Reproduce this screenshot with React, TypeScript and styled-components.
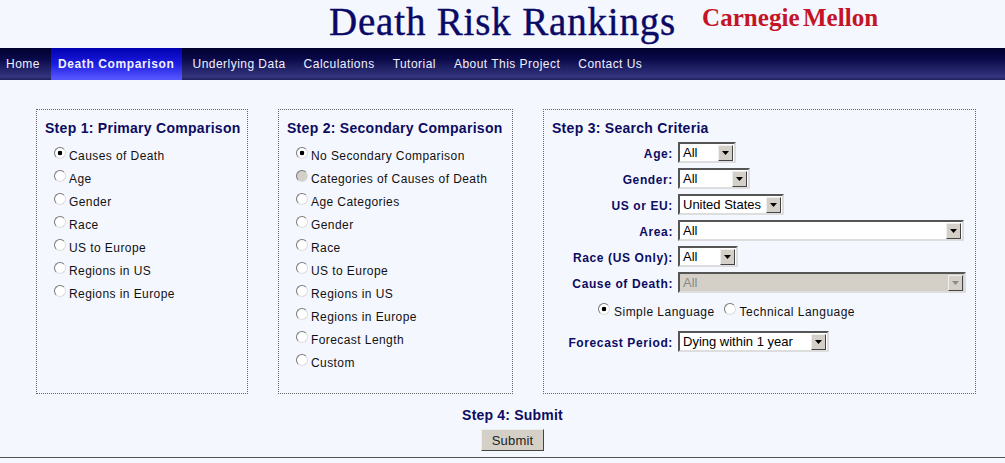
import React from "react";
import styled, { createGlobalStyle } from "styled-components";

const GlobalStyle = createGlobalStyle`
    html, body {
        margin: 0;
        padding: 0;
        background-color: #f5f7ff;
    }
    body {
        font-family: "Liberation Sans", Arial, sans-serif;
        font-size: 12px;
        color: #111;
        overflow: hidden;
    }
`;

const navItems = [
    "Home",
    "Death Comparison",
    "Underlying Data",
    "Calculations",
    "Tutorial",
    "About This Project",
    "Contact Us",
];

const primary = [
    "Causes of Death",
    "Age",
    "Gender",
    "Race",
    "US to Europe",
    "Regions in US",
    "Regions in Europe",
];

const secondary = [
    "No Secondary Comparison",
    "Categories of Causes of Death",
    "Age Categories",
    "Gender",
    "Race",
    "US to Europe",
    "Regions in US",
    "Regions in Europe",
    "Forecast Length",
    "Custom",
];

const criteria = [
    { label: "Age:", value: "All", width: 58 },
    { label: "Gender:", value: "All", width: 72 },
    { label: "US or EU:", value: "United States", width: 106 },
    { label: "Area:", value: "All", width: 286 },
    { label: "Race (US Only):", value: "All", width: 60 },
    { label: "Cause of Death:", value: "All", width: 288, disabled: true },
];

type SelectProps = { value: string; width: number; disabled?: boolean };

const FakeSelect = ({ value, width, disabled }: SelectProps) => (
    <SelectBox $disabled={disabled} style={{ width }}>
        <span>{value}</span>
        <Arrow $disabled={disabled}>
            <svg width="7" height="4" viewBox="0 0 7 4">
                <path d="M0 0h7L3.5 4z" fill={disabled ? "#8a8a86" : "#000"} />
            </svg>
        </Arrow>
    </SelectBox>
);

const App = () => {
    return (
        <>
            <GlobalStyle />
            <Header>
                <Title>Death Risk Rankings</Title>
                <Logo>Carnegie Mellon</Logo>
            </Header>
            <Nav>
                {navItems.map((item) => (
                    <NavItem key={item} $active={item === "Death Comparison"}>
                        {item}
                    </NavItem>
                ))}
            </Nav>
            <Form>
                <Panels>
                    <Panel $width={212}>
                        <StepTitle>Step 1: Primary Comparison</StepTitle>
                        <RadioList>
                            {primary.map((item, i) => (
                                <RadioRow key={item}>
                                    <Radio name="primary" defaultChecked={i === 0} />
                                    {item}
                                </RadioRow>
                            ))}
                        </RadioList>
                    </Panel>
                    <Panel $width={235}>
                        <StepTitle>Step 2: Secondary Comparison</StepTitle>
                        <RadioList>
                            {secondary.map((item, i) => (
                                <RadioRow key={item}>
                                    <Radio
                                        name="secondary"
                                        defaultChecked={i === 0}
                                        disabled={i === 1}
                                    />
                                    {item}
                                </RadioRow>
                            ))}
                        </RadioList>
                    </Panel>
                    <Panel $width={433}>
                        <StepTitle>Step 3: Search Criteria</StepTitle>
                        <CriteriaGrid>
                            {criteria.map((c) => (
                                <React.Fragment key={c.label}>
                                    <FieldLabel>{c.label}</FieldLabel>
                                    <FakeSelect
                                        value={c.value}
                                        width={c.width}
                                        disabled={c.disabled}
                                    />
                                </React.Fragment>
                            ))}
                        </CriteriaGrid>
                        <LanguageRow>
                            <LanguageOption>
                                <Radio name="language" defaultChecked />
                                Simple Language
                            </LanguageOption>
                            <LanguageOption>
                                <Radio name="language" />
                                Technical Language
                            </LanguageOption>
                        </LanguageRow>
                        <ForecastGrid>
                            <FieldLabel>Forecast Period:</FieldLabel>
                            <FakeSelect value="Dying within 1 year" width={151} />
                        </ForecastGrid>
                    </Panel>
                </Panels>
                <SubmitTitle>Step 4: Submit</SubmitTitle>
                <SubmitButton type="button">Submit</SubmitButton>
            </Form>
            <FooterRule />
        </>
    );
};

export default App;

const Header = styled.header`
    display: flex;
    align-items: flex-start;
    height: 48px;
    padding-left: 329px;
`;
const Title = styled.h1`
    margin: 0;
    font-family: "Liberation Serif", "Times New Roman", serif;
    font-size: 39px;
    line-height: 43px;
    font-weight: 400;
    letter-spacing: 0.82px;
    -webkit-text-stroke: 0.4px #0a0a66;
    color: #0a0a66;
    white-space: nowrap;
`;
const Logo = styled.div`
    margin: 4px 0 0 26px;
    font-family: "Liberation Serif", "Times New Roman", serif;
    font-size: 25px;
    line-height: 28px;
    font-weight: 700;
    letter-spacing: 0.05px;
    word-spacing: -3px;
    color: #c41425;
    white-space: nowrap;
`;
const Nav = styled.nav`
    display: flex;
    height: 32px;
    background: linear-gradient(#00002e, #0a0a4a 35%, #35357f 90%, #20205a);
`;
const NavItem = styled.a<{ $active?: boolean }>`
    display: flex;
    align-items: center;
    margin: ${(p) => (p.$active ? "0 2px" : "0")};
    padding: ${(p) => (p.$active ? "0 7px 1px" : "0 9px 1px")};
    font-size: 12px;
    letter-spacing: ${(p) => (p.$active ? "0.62px" : "0.47px")};
    color: #f0f0ff;
    white-space: nowrap;
    font-weight: ${(p) => (p.$active ? 700 : 400)};
    background: ${(p) =>
        p.$active ? "linear-gradient(#0000b0, #1c1ce0 50%, #5555ff 95%)" : "none"};
    &:first-child {
        padding-left: 6px;
    }
`;
const Form = styled.form`
    display: flex;
    flex-direction: column;
    align-items: center;
    width: 1025px;
`;
const Panels = styled.div`
    display: flex;
    align-self: flex-start;
    gap: 30px;
    margin: 29px 0 0 36px;
`;
const Panel = styled.fieldset<{ $width: number }>`
    box-sizing: border-box;
    width: ${(p) => p.$width}px;
    height: 285px;
    margin: 0;
    padding: 10px 8px 0;
    border: 1px dotted #666;
    min-width: 0;
`;
const StepTitle = styled.h2`
    margin: 0;
    font-size: 14px;
    line-height: 16px;
    font-weight: 700;
    letter-spacing: 0.28px;
    color: #0c0c60;
    white-space: nowrap;
`;
const RadioList = styled.div`
    display: flex;
    flex-direction: column;
    gap: 5px;
    margin: 11px 0 0 9px;
`;
const RadioRow = styled.label`
    display: flex;
    align-items: center;
    gap: 3px;
    height: 18px;
    letter-spacing: 0.42px;
    white-space: nowrap;
`;
const LanguageOption = styled(RadioRow)`
    gap: 4px;
    letter-spacing: 0.48px;
`;
const Radio = styled.input.attrs({ type: "radio" })`
    appearance: none;
    box-sizing: border-box;
    flex: none;
    width: 12px;
    height: 12px;
    margin: -7px 0 0;
    border-radius: 50%;
    border: 1px solid #777;
    border-right-color: #ddd;
    border-bottom-color: #ddd;
    background: #fff;
    &:checked {
        background: radial-gradient(circle, #000 0 2px, #fff 2.6px);
    }
    &:disabled {
        background: #d4d0c8;
    }
`;
const CriteriaGrid = styled.div`
    display: grid;
    grid-template-columns: 121px auto;
    grid-auto-rows: 21px;
    row-gap: 5px;
    column-gap: 5px;
    justify-items: start;
    align-items: center;
    margin-top: 6px;
`;
const ForecastGrid = styled(CriteriaGrid)`
    margin-top: 10px;
`;
const FieldLabel = styled.label`
    justify-self: end;
    padding-top: 2px;
    font-weight: 700;
    letter-spacing: 0.62px;
    color: #0c0c60;
    white-space: nowrap;
`;
const SelectBox = styled.div<{ $disabled?: boolean }>`
    box-sizing: border-box;
    display: flex;
    align-items: center;
    justify-content: space-between;
    height: 21px;
    padding: 0 1px 0 3px;
    font-size: 13px;
    letter-spacing: 0;
    border: 2px solid;
    border-color: #555 #ddd #ddd #555;
    background: ${(p) => (p.$disabled ? "#d4d0c8" : "#fff")};
    color: ${(p) => (p.$disabled ? "#8a8a86" : "#000")};
    white-space: nowrap;
`;
const Arrow = styled.span<{ $disabled?: boolean }>`
    box-sizing: border-box;
    display: flex;
    align-items: center;
    justify-content: center;
    flex: none;
    width: 15px;
    height: 16px;
    background: #d4d0c8;
    border: 1px solid;
    border-color: #eee #444 #444 #eee;
`;
const LanguageRow = styled.div`
    display: flex;
    gap: 9px;
    margin-top: 10px;
    padding-left: 46px;
`;
const SubmitTitle = styled.h2`
    margin: 13px 0 0;
    font-size: 14px;
    line-height: 16px;
    font-weight: 700;
    letter-spacing: 0.2px;
    color: #0c0c60;
`;
const SubmitButton = styled.button`
    box-sizing: border-box;
    width: 63px;
    height: 22px;
    margin-top: 6px;
    padding: 0;
    font-family: inherit;
    font-size: 13px;
    letter-spacing: 0.2px;
    color: #222;
    background: #d4d0c8;
    border: 1px solid;
    border-color: #eee #444 #444 #eee;
`;
const FooterRule = styled.hr`
    margin: 6px 0 0;
    border: 0;
    height: 1px;
    background: #555;
`;
